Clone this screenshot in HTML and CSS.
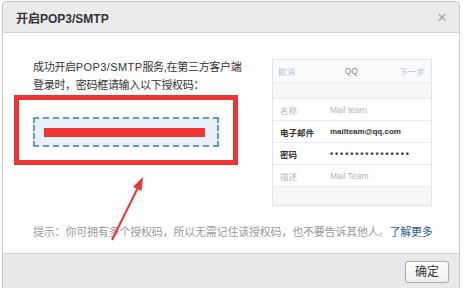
FILE: index.html
```html
<!DOCTYPE html>
<html lang="zh-CN">
<head>
    <meta charset="UTF-8">
    <title>开启POP3/SMTP</title>
    <link rel="stylesheet" href="styles.css">
</head>
<body>
<div class="dialog">
    <div class="head">
        <span class="title">开启POP3/SMTP</span>
        <span class="close">&times;</span>
    </div>
    <div class="body">
        <div class="main">
            <div class="left">
                <p class="tip">成功开启<span class="en">POP3/SMTP</span>服务,在第三方客户端<br>登录时，密码框请输入以下授权码：</p>
                <div class="mark">
                    <div class="code"><span class="hide"></span></div>
                </div>
            </div>
            <div class="phone">
                <div class="bar">
                    <span class="blue">取消</span>
                    <span class="qq">QQ</span>
                    <span class="blue">下一步</span>
                </div>
                <div class="rows">
                    <div class="row light"><label>名称</label><span>Mail team</span></div>
                    <div class="row"><label>电子邮件</label><span>mailteam@qq.com</span></div>
                    <div class="row"><label>密码</label><span class="dots">••••••••••••••••</span></div>
                    <div class="row light"><label>描述</label><span>Mail Team</span></div>
                </div>
            </div>
        </div>
        <p class="hint">提示：你可拥有多个授权码，所以无需记住该授权码，也不要告诉其他人。<a href="javascript:;">了解更多</a></p>
        <!-- 标注箭头 -->
        <svg class="arrow" width="50" height="75" viewBox="0 0 50 75">
            <line x1="12" y1="67" x2="37.5" y2="15.5" stroke="#ee3333" stroke-width="2"/>
            <polygon points="43,4 41.5,18 33,14" fill="#ee3333"/>
        </svg>
    </div>
    <div class="foot">
        <a href="javascript:;" class="btn">确定</a>
    </div>
</div>
</body>
</html>
```

FILE: styles.css
```css
body{
    margin: 0;
    background: #fff;
    font-family: "Liberation Sans", "Noto Sans CJK SC", sans-serif;
    overflow: hidden;
}
.dialog{
    width: 456px;
    height: 287px;
    margin: 1px 0 0 2px;
    border: 1px solid #c6c6c6;
    border-bottom: 0;
    border-radius: 4px 4px 0 0;
    overflow: hidden;
    background: #fff;
}
.head{
    height: 30px;
    background: #ebebeb;
    border-bottom: 1px solid #d2d2d2;
    display: flex;
    align-items: center;
    justify-content: space-between;
    padding: 0 12px 0 13px;
}
.title{
    font-size: 12px;
    font-weight: bold;
    color: #333;
}
.close{
    font-size: 17px;
    color: #a8a8a8;
    line-height: 1;
}
.body{
    position: relative;
    height: 220px;
}
.main{
    display: flex;
    align-items: flex-start;
}
.left{
    width: 240px;
}
.tip{
    margin: 0;
    padding: 25px 0 0 30px;
    font-size: 11px;
    line-height: 18px;
    color: #333;
    white-space: nowrap;
    letter-spacing: -0.3px;
}
.tip .en{
    letter-spacing: 0.4px;
}
.mark{
    width: 186px;
    margin: 1px 0 0 11px;
    padding: 17px 14px 13px;
    border: 5px solid #ee3333;
}
.code{
    border: 2px dashed #5e9cc2;
    background: #e8f1f8;
    padding: 9px 0 0 9px;
    box-sizing: border-box;
    height: 30px;
}
.hide{
    display: block;
    width: 161px;
    height: 9px;
    background: #f03434;
}
.phone{
    width: 158px;
    margin: 26px 0 0 29px;
    border: 1px solid #e4e4e4;
    background: #f5f6f8;
    padding-bottom: 18px;
}
.bar{
    height: 22px;
    background: #fbfbfb;
    border-bottom: 1px solid #ececec;
    display: flex;
    align-items: center;
    justify-content: space-between;
    padding: 0 6px 0 5px;
    font-size: 8.5px;
    margin-bottom: 15px;
}
.blue{
    color: #9fc4e6;
}
.qq{
    color: #8a8a8a;
    margin-left: 8px;
}
.rows{
    background: #fff;
    border-top: 1px solid #ececec;
}
.row{
    height: 21px;
    border-bottom: 1px solid #ececec;
    display: flex;
    align-items: center;
    padding-left: 7px;
    font-size: 8px;
    color: #333;
    font-weight: bold;
}
.row label{
    width: 50px;
    font-size: 8.5px;
}
.row.light{
    color: #b5b5b5;
    font-weight: normal;
}
.row.light span{
    font-size: 8.5px;
}
.dots{
    font-size: 9px;
    letter-spacing: 1.9px;
}
.hint{
    margin: 17px 0 0 30px;
    font-size: 11px;
    line-height: 18px;
    color: #9a9a9a;
    white-space: nowrap;
    letter-spacing: -0.2px;
}
.hint a{
    color: #2b5d9e;
    text-decoration: none;
}
.arrow{
    position: absolute;
    left: 97px;
    top: 140px;
}
.foot{
    height: 27px;
    background: #e9e9e9;
    border-top: 1px solid #d4d4d4;
    display: flex;
    justify-content: flex-end;
    align-items: flex-start;
    padding: 7px 10px 0 0;
}
.btn{
    width: 42px;
    height: 20px;
    line-height: 20px;
    text-align: center;
    border: 1px solid #a9a9a9;
    border-radius: 3px;
    background: linear-gradient(#fff, #efefef);
    font-size: 12px;
    color: #333;
    text-decoration: none;
}
```
